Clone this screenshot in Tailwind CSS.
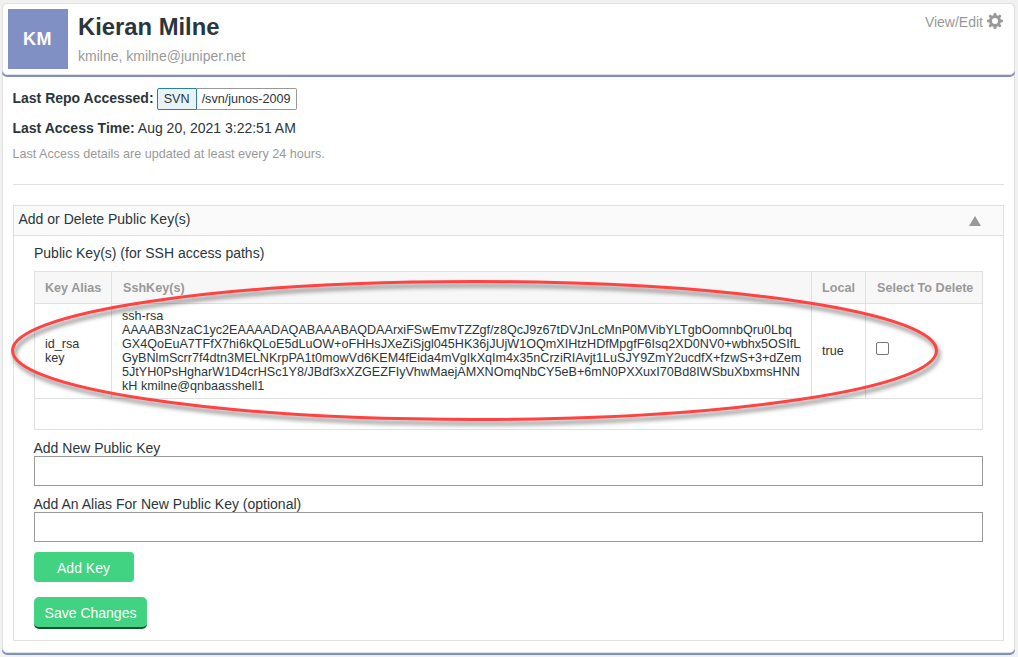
<!DOCTYPE html>
<html lang="en">
<head>
<meta charset="utf-8">
<title>Kieran Milne</title>
<script src="https://cdn.jsdelivr.net/npm/@tailwindcss/browser@4"></script>
</head>
<body class="relative h-[657px] w-[1018px] overflow-hidden bg-[#f1f1f1] pl-[2px] pt-[3px] font-['Liberation_Sans',Arial,sans-serif] text-[14px] leading-[20px] text-[#2b363c]">
<main class="h-[650px] w-[1013px] rounded-[5px] border border-[#e0e0e0] bg-white shadow-[0_2px_0_#8190c4]">
  <header class="-mx-px -mt-px flex h-[72px] rounded-[5px] border border-[#e0e0e0] bg-white pl-[5px] pt-[5px] shadow-[0_2px_0_#8190c4]">
    <div class="flex size-[60px] items-center justify-center bg-[#8190c4] pr-[1px] text-[18px] font-bold tracking-[0.4px] text-white">KM</div>
    <div class="ml-[10px] flex-1 whitespace-nowrap">
      <h1 class="pt-[3px] text-[23.8px] font-bold leading-[30px]">Kieran Milne</h1>
      <p class="pt-[4px] text-[#999]">kmilne, kmilne@juniper.net</p>
    </div>
    <div class="mr-[11px] mt-[3px] flex h-[20px] items-center gap-[4px] text-[#999]">
      <span>View/Edit</span>
      <svg class="mb-[2px] size-[16px]" viewBox="0 0 16 16" fill="#999"><path fill-rule="evenodd" d="M6.8 0h2.4l.4 2.200 1.400.6 1.900-1.300 1.600 1.600-1.300 1.900.6 1.400 2.200.4v2.400l-2.200.4-.6 1.400 1.300 1.900-1.600 1.600-1.900-1.300-1.400.6-.4 2.200H6.800l-.4-2.200-1.400-.6-1.900 1.300-1.600-1.600 1.300-1.900-.6-1.400L0 9.200V6.800l2.200-.4.6-1.400-1.300-1.900 1.600-1.600L5 2.800l1.400-.6zM8 5a3 3 0 1 0 0 6 3 3 0 0 0 0-6z"/></svg>
    </div>
  </header>
  <section class="mx-[10px] h-[110px] border-b border-[#e0e0e0] pt-[13px]">
    <div class="-ml-[0.5px] flex h-[22px] items-center whitespace-nowrap">
      <b class="mr-[3px] pb-[2px]">Last Repo Accessed:</b>
      <span class="flex h-[22px] w-[40px] items-center justify-center rounded-l-[2px] border border-[#2f8296] bg-[#e7f3f6] text-[12.6px]">SVN</span>
      <span class="flex h-[22px] w-[100px] items-center justify-center rounded-r-[2px] border border-l-0 border-[#999] text-[12.6px]">/svn/junos-2009</span>
    </div>
    <p class="-ml-[0.5px] mt-[8px]"><b>Last Access Time:</b> Aug 20, 2021 3:22:51 AM</p>
    <p class="-ml-[0.5px] mt-[7px] text-[12.6px] leading-[18px] text-[#999]">Last Access details are updated at least every 24 hours.</p>
  </section>
  <section class="mx-[10px] mt-[20px] h-[436px] border border-[#e0e0e0]">
    <div class="flex h-[30px] items-center justify-between border-b border-[#e0e0e0] bg-[#fafafa] pb-[3px] pl-[4.5px] pr-[22px]">
      <span>Add or Delete Public Key(s)</span>
      <svg class="mt-[4px] h-[10px] w-[12px]" viewBox="0 0 12 10"><path d="M6 0l6 10H0z" fill="#999"/></svg>
    </div>
    <div class="px-[20px] pt-[7px]">
      <p>Public Key(s) (for SSH access paths)</p>
      <div class="mt-[8px] grid h-[159px] w-[949px] grid-cols-[77px_700px_54px_116px] grid-rows-[32px_95px_30px] border border-[#e0e0e0] text-[12.6px] leading-[14px]">
        <div class="flex items-center border-b border-r border-[#e0e0e0] bg-[#f7f7f7] pl-[10px] font-bold text-[#999]">Key Alias</div>
        <div class="flex items-center border-b border-r border-[#e0e0e0] bg-[#f7f7f7] pl-[11px] font-bold text-[#999]">SshKey(s)</div>
        <div class="flex items-center border-b border-r border-[#e0e0e0] bg-[#f7f7f7] pl-[10px] font-bold text-[#999]">Local</div>
        <div class="flex items-center whitespace-nowrap border-b border-[#e0e0e0] bg-[#f7f7f7] pl-[11px] font-bold text-[#999]">Select To Delete</div>
        <div class="flex items-center border-b border-r border-[#e0e0e0] pl-[10px]">id_rsa<br>key</div>
        <div class="flex flex-col justify-center whitespace-nowrap border-b border-r border-[#e0e0e0] pl-[10px]">
          <p>ssh-rsa</p>
          <p>AAAAB3NzaC1yc2EAAAADAQABAAABAQDAArxiFSwEmvTZZgf/z8QcJ9z67tDVJnLcMnP0MVibYLTgbOomnbQru0Lbq</p>
          <p>GX4QoEuA7TFfX7hi6kQLoE5dLuOW+oFHHsJXeZiSjgl045HK36jJUjW1OQmXIHtzHDfMpgfF6Isq2XD0NV0+wbhx5OSIfL</p>
          <p>GyBNlmScrr7f4dtn3MELNKrpPA1t0mowVd6KEM4fEida4mVgIkXqIm4x35nCrziRIAvjt1LuSJY9ZmY2ucdfX+fzwS+3+dZem</p>
          <p>5JtYH0PsHgharW1D4crHSc1Y8/JBdf3xXZGEZFIyVhwMaejAMXNOmqNbCY5eB+6mN0PXXuxI70Bd8IWSbuXbxmsHNN</p>
          <p>kH kmilne@qnbaasshell1</p>
        </div>
        <div class="flex items-center border-b border-r border-[#e0e0e0] pl-[10px]">true</div>
        <div class="border-b border-[#e0e0e0] pl-[10px] pt-[38px]"><div class="size-[13px] rounded-[2px] border border-[#767676] bg-white"></div></div>
      </div>
      <p class="-ml-[0.5px] mt-[8px] h-[18px] leading-[20px]">Add New Public Key</p>
      <div class="h-[30px] w-[949px] border border-[#999]"></div>
      <p class="-ml-[0.5px] mt-[8px] h-[18px] leading-[20px]">Add An Alias For New Public Key (optional)</p>
      <div class="h-[30px] w-[949px] border border-[#999]"></div>
      <button class="mt-[10px] block h-[30px] w-[100px] rounded-[4px] bg-[#41d282] pr-[1px] pt-[2px] text-white">Add Key</button>
      <button class="mt-[15px] block h-[32px] w-[113px] whitespace-nowrap rounded-[5px] border-b-2 border-[#0c5527] bg-[#41d282] pt-[1px] text-white">Save Changes</button>
    </div>
  </section>
</main>
<svg class="absolute left-0 top-0 h-[657px] w-[1018px] drop-shadow-[2px_4px_2px_rgba(0,0,0,0.5)]" viewBox="0 0 1018 657" fill="none"><ellipse cx="474.500" cy="350.500" rx="462" ry="69" stroke="#ff4343" stroke-width="3"/></svg>
</body>
</html>
